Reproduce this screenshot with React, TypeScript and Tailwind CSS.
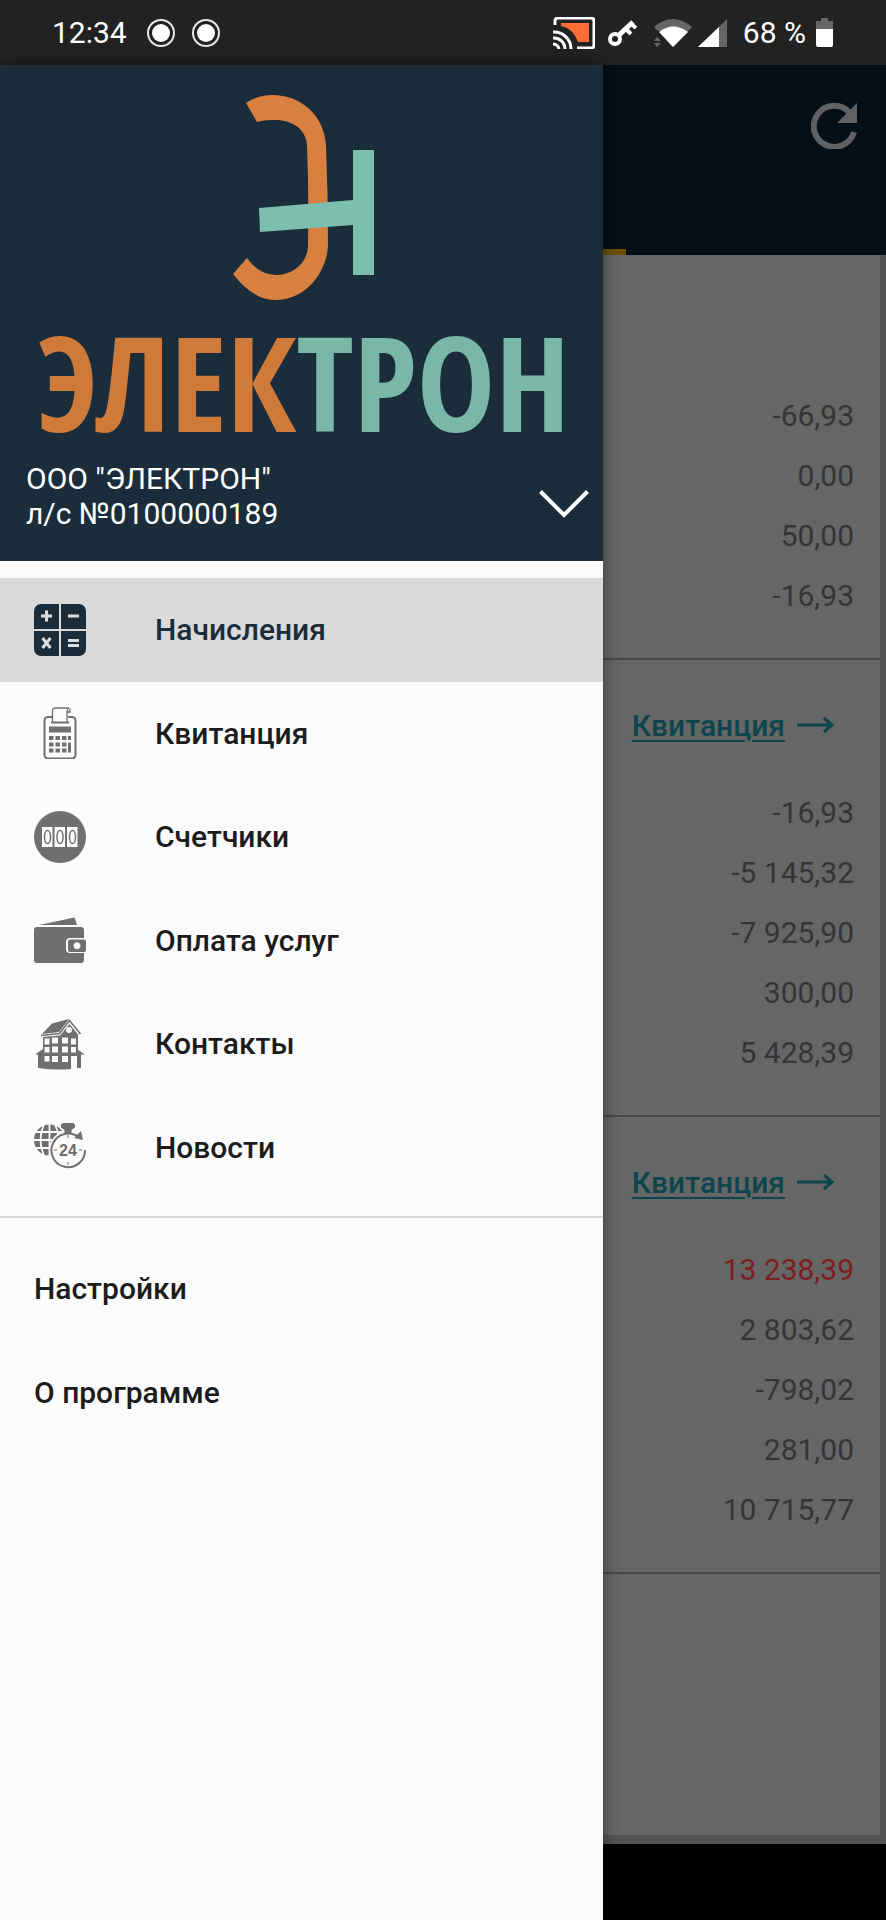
import { clsx } from 'clsx';

type Bill = {
  id: string;
  receipt: boolean;
  amounts: { value: string; debt?: boolean }[];
};

const bills: Bill[] = [
  {
    id: 'current',
    receipt: false,
    amounts: [{ value: '-66,93' }, { value: '0,00' }, { value: '50,00' }, { value: '-16,93' }],
  },
  {
    id: 'previous',
    receipt: true,
    amounts: [
      { value: '-16,93' },
      { value: '-5 145,32' },
      { value: '-7 925,90' },
      { value: '300,00' },
      { value: '5 428,39' },
    ],
  },
  {
    id: 'older',
    receipt: true,
    amounts: [
      { value: '13 238,39', debt: true },
      { value: '2 803,62' },
      { value: '-798,02' },
      { value: '281,00' },
      { value: '10 715,77' },
    ],
  },
];

function CalculatorIcon() {
  return (
    <svg viewBox="0 0 52 52" className="size-[52px]" aria-hidden="true">
      <path d="M7 0h18v25H0V7a7 7 0 0 1 7-7zM27 0h18a7 7 0 0 1 7 7v18H27zM0 27h25v25H7a7 7 0 0 1-7-7zM27 27h25v18a7 7 0 0 1-7 7H27z" fill="#1b2d3b" />
      <path d="M7 12h11M12.500 6.500v11M34 12h11M34 36.500h11M34 41.500h11" stroke="#dcdcdc" strokeWidth="3" />
      <path d="M8.500 34l8 10M16.500 34l-8 10" stroke="#dcdcdc" strokeWidth="3" />
    </svg>
  );
}

function ReceiptIcon() {
  return (
    <svg viewBox="0 0 52 52" className="size-[52px]" fill="none" stroke="#6f6f6f" aria-hidden="true">
      <path d="M18 10h-4a3.500 3.500 0 0 0-3.500 3.500V48a3.500 3.500 0 0 0 3.500 3.500h24a3.500 3.500 0 0 0 3.500-3.500V13.500A3.500 3.500 0 0 0 38 10h-4" strokeWidth="2" />
      <path d="M17 15.500h18" strokeWidth="2" />
      <path d="M18.500 15V4q0-3 3-3H35q-2 1-2 4v10M33 5h3V1.500" strokeWidth="1.300" />
      <path d="M15 19.500h22v6H15z" fill="#6f6f6f" stroke="none" />
      <path
        d="M15 29h4.500v4H15zM21.500 29H26v4h-4.500zM28 29h4.500v4H28zM34 29h3v4h-3zM15 35.500h4.500v4H15zM21.500 35.500H26v4h-4.500zM28 35.500h4.500v4H28zM15 41.500h4.500v4H15zM21.500 41.500H26v4h-4.500zM28 41.500h4.500v4H28zM34 35.500h3v10h-3z"
        fill="#6f6f6f"
        stroke="none"
      />
    </svg>
  );
}

function MeterIcon() {
  return (
    <svg viewBox="0 0 52 52" className="size-[52px]" aria-hidden="true">
      <circle cx="26" cy="26" r="26" fill="#6f6f6f" />
      <path d="M8 16h10.500v20H8zM20.500 16H31v20H20.500zM33 16h10.500v20H33z" fill="#fbfbfb" />
      <g fill="none" stroke="#6f6f6f" strokeWidth="1.500">
        <ellipse cx="13.500" cy="26" rx="3" ry="6.500" />
        <ellipse cx="26" cy="26" rx="3" ry="6.500" />
        <ellipse cx="38.500" cy="26" rx="3" ry="6.500" />
      </g>
    </svg>
  );
}

function WalletIcon() {
  return (
    <svg viewBox="0 0 52 52" className="size-[52px]" fill="#6f6f6f" aria-hidden="true">
      <path d="M5 11L40.500 3.500 43 11z" />
      <path d="M3 13h44q3 0 3 3v8H36q-4 0-4 4v7q0 4 4 4h14v7q0 3-3 3H3q-3 0-3-3V16q0-3 3-3z" />
      <path fillRule="evenodd" d="M36 25.500h14q2 0 2 2v8.500q0 2-2 2H36q-2 0-2-2v-8.500q0-2 2-2zM43 28.300a3.500 3.500 0 1 0 .01 0z" />
    </svg>
  );
}

function HouseIcon() {
  return (
    <svg viewBox="0 0 52 52" className="size-[52px]" aria-hidden="true">
      <path d="M8 16L18 5.500 35 1 25 14z" fill="#6f6f6f" />
      <path d="M7 17.500l18.500-2L35.500 2.500 46.500 16" fill="none" stroke="#6f6f6f" strokeWidth="1.600" />
      <path d="M9 19l17-1.500L35.500 6 44 16.500V32l7 4.500h-4V50h-4V38h-6v13q-16 1.500-33-1V36.500H1L9 31z" fill="#6f6f6f" />
      <g fill="#fbfbfb">
        <circle cx="35" cy="12" r="3" />
        <path d="M10.500 20.500h5v6h-5zM18 19.500h6v6h-6zM28 19.500h6v6h-6zM37 20.500h5v6h-5z" />
        <path d="M10.500 29h5v5.500h-5zM18 28.500h6v6h-6zM28 28.500h6v6h-6zM37 29h5v5.500h-5z" />
        <path d="M10.500 38h5v5.500h-5zM18 38h6v6h-6zM28 38h6v6h-6z" />
      </g>
    </svg>
  );
}

function NewsIcon() {
  return (
    <svg viewBox="0 0 52 52" className="size-[52px]" aria-hidden="true">
      <circle cx="15.500" cy="19" r="15.500" fill="#6f6f6f" />
      <path d="M0 11h31M0 19h31M0 27h31M15.500 3v32M10 3Q3 19 10 35M21 3q7 16 0 32" fill="none" stroke="#fbfbfb" strokeWidth="1.800" />
      <circle cx="34" cy="29" r="19" fill="#fbfbfb" />
      <path d="M45 16.500A16.800 16.800 0 1 0 51 29" fill="none" stroke="#6f6f6f" strokeWidth="2" />
      <path d="M47 10l2 9-9-2zM29 2h10l2 1.500v3L37.500 9v3h-7V9L27 6.500v-3z" fill="#6f6f6f" />
      <path d="M34 14v3M34 41v3M20 29h3M45 29h3" stroke="#6f6f6f" strokeWidth="1" />
      <text x="34" y="34.500" textAnchor="middle" fontFamily="Liberation Sans, sans-serif" fontSize="16" fontWeight="700" fill="#6f6f6f">24</text>
    </svg>
  );
}

const menu = [
  { label: 'Начисления', icon: CalculatorIcon, active: true },
  { label: 'Квитанция', icon: ReceiptIcon },
  { label: 'Счетчики', icon: MeterIcon },
  { label: 'Оплата услуг', icon: WalletIcon },
  { label: 'Контакты', icon: HouseIcon },
  { label: 'Новости', icon: NewsIcon },
];

function StatusBar() {
  return (
    <header className="flex h-[65px] shrink-0 items-center bg-[#222222] pr-[53px] pl-[52px] text-[30px] text-white">
      <span>12:34</span>
      <svg viewBox="0 0 74 30" className="ml-[19px] h-[30px] w-[74px]" aria-hidden="true">
        <g fill="none" stroke="#e8e8e8" strokeWidth="2">
          <circle cx="15" cy="15" r="13" />
          <circle cx="60" cy="15" r="13" />
        </g>
        <circle cx="15" cy="15" r="9" fill="#ffffff" />
        <circle cx="60" cy="15" r="9" fill="#ffffff" />
      </svg>

      <div className="ml-auto flex items-center">
        {/* cast */}
        <svg viewBox="0 0 42 32" className="h-8 w-[42px]" fill="none" aria-hidden="true">
          <path d="M2 8V4q0-3 3-3h33q3 0 3 3v24q0 3-3 3H24" stroke="#ffffff" strokeWidth="3" />
          <path d="M8 6h28v19H25Q20 11 8 9z" fill="#ff6e37" />
          <path d="M0 15a17 17 0 0 1 18 17M0 21a11 11 0 0 1 12 11M0 27a6 6 0 0 1 6 5" stroke="#ffffff" strokeWidth="3" />
        </svg>
        {/* vpn key */}
        <svg viewBox="0 0 30 26" className="ml-[13px] h-[26px] w-[30px]" fill="none" stroke="#ffffff" aria-hidden="true">
          <circle cx="7" cy="19" r="5" strokeWidth="4" />
          <path d="M11 15L25 2" strokeWidth="5" />
          <path d="M18 9l5 5M23 4l5 4" strokeWidth="4" />
        </svg>
        {/* wifi */}
        <svg viewBox="0 0 38 28" className="ml-4 h-7 w-[38px]" aria-hidden="true">
          <path d="M0 8q19-16 38 0L19 28z" fill="#666666" />
          <path d="M0 12h8l7 16H0z" fill="#222222" />
          <path d="M5 13q14-11 29 0L19 28z" fill="#ffffff" />
          <path d="M0 22l3-4 4 4zM0 24h7l-4 4z" fill="#666666" />
        </svg>
        {/* mobile signal */}
        <svg viewBox="0 0 29 28" className="ml-[6px] h-7 w-[29px]" aria-hidden="true">
          <path d="M29 0v28H0z" fill="#666666" />
          <path d="M21 8v20H0z" fill="#ffffff" />
        </svg>
        <span className="ml-4">68 %</span>
        {/* battery */}
        <svg viewBox="0 0 17 29" className="ml-[10px] h-[29px] w-[17px]" aria-hidden="true">
          <path d="M5 0h7v3h5v9H0V3h5z" fill="#666666" />
          <path d="M0 11h17v16q0 2-2 2H2q-2 0-2-2z" fill="#ffffff" />
        </svg>
      </div>
    </header>
  );
}

function Emblem() {
  return (
    <svg viewBox="0 0 142 205" className="h-[205px] w-[142px]" aria-hidden="true">
      <path
        d="M13 8Q25 0 39 0C68 0 91 20 93 50Q95 100 95 150C94 178 72 205 43 205Q20 205 0 179L14 163Q26 180 43 180C60 180 75 168 75 150Q76 100 74 50C73 34 59 24 39 25Q30 25 24 27z"
        fill="#d8803f"
      />
      <path d="M120 55h21v125h-21v-50L27 137l-1-24 94-8z" fill="#7dbfae" />
    </svg>
  );
}

function Drawer() {
  return (
    <aside className="relative z-10 flex w-[603px] shrink-0 flex-col bg-[#fbfbfb] shadow-[0_0_16px_rgba(0,0,0,0.45)]">
      <div className="bg-[#1b2d3b] pt-[30px] pb-[30px] text-white">
        <div className="flex flex-col items-center pl-1">
          <Emblem />
          <p className="mt-4 font-['Open_Sans_Condensed','Open_Sans',sans-serif] text-[132px] leading-[130px] font-bold whitespace-nowrap text-[#cf7a38]">
            ЭЛЕК<span className="text-[#79b7a7]">ТРОН</span>
          </p>
        </div>
        <div className="mt-[15px] flex items-center justify-between pr-[14px] pl-[26px]">
          <div className="text-[30px] leading-[35px]">
            <p>ООО "ЭЛЕКТРОН"</p>
            <p>л/с №0100000189</p>
          </div>
          <button type="button" aria-label="Выбрать лицевой счет" className="pt-4">
            <svg viewBox="0 0 50 28" className="h-7 w-[50px]" fill="none" stroke="#ffffff" strokeWidth="4">
              <path d="M1.500 1.500L25 25 48.500 1.500" />
            </svg>
          </button>
        </div>
      </div>

      <nav className="flex flex-col pt-[17px]">
        <div className="grid h-[621px] grid-rows-6">
          {menu.map(({ label, icon: Icon, active }) => (
            <a
              key={label}
              href="#"
              className={clsx(
                'flex items-center gap-[69px] pl-[34px] text-[30px] font-medium',
                active ? 'bg-[#dadada] text-[#1b2d3b]' : 'text-[#1c1c1c]',
              )}
            >
              <Icon />
              {label}
            </a>
          ))}
        </div>
        <div className="mt-[17px] border-t-2 border-[#d8d8d8] pt-[18px] text-[30px] font-medium text-[#1c1c1c]">
          <a href="#" className="flex h-[104px] items-center pl-[34px]">Настройки</a>
          <a href="#" className="flex h-[104px] items-center pl-[34px]">О программе</a>
        </div>
      </nav>
    </aside>
  );
}

export default function App() {
  return (
    <div className="flex min-h-screen flex-col bg-black font-['Roboto',sans-serif]">
      <StatusBar />
      <div className="flex flex-1">
        <Drawer />

        <main className="flex min-w-0 flex-1 flex-col">
          <div className="flex h-[190px] flex-col items-end justify-between bg-[#040f16]">
            <button type="button" aria-label="Обновить" className="mt-[37px] mr-[28px]">
              <svg viewBox="0 0 47 47" className="size-[47px]" aria-hidden="true">
                <path d="M38 10A20.500 20.500 0 1 0 43 30" fill="none" stroke="#5f6163" strokeWidth="6" />
                <path d="M46 1v20H26z" fill="#5f6163" />
              </svg>
            </button>
            <div className="h-[6px] w-full">
              <div className="h-full w-[23px] bg-[#6b4e00]" />
            </div>
          </div>

          <div className="flex flex-1 flex-col bg-[#545454] pr-[6px] pb-[9px]">
            <div className="flex-1 bg-[#666666] pt-[130px]">
              {bills.map((bill) => (
                <section key={bill.id} className="border-b-2 border-[#48484c] pb-[33px]">
                  {bill.receipt && (
                    <div className="flex h-[122px] items-center justify-end gap-3 pt-[8px] pr-[46px]">
                      <a
                        href="#"
                        className="text-[30px] font-medium text-[#0c454b] underline decoration-2 underline-offset-4"
                      >
                        Квитанция
                      </a>
                      <svg viewBox="0 0 37 20" className="h-5 w-[37px]" fill="none" stroke="#0c454b" strokeWidth="3" aria-hidden="true">
                        <path d="M0 10h34M27 3l8 7-8 7" />
                      </svg>
                    </div>
                  )}
                  {bill.amounts.map(({ value, debt }) => (
                    <p
                      key={value}
                      className={clsx(
                        'flex h-[60px] items-center justify-end pr-[26px] text-[30px]',
                        debt ? 'text-[#7a2020]' : 'text-[#353535]',
                      )}
                    >
                      {value}
                    </p>
                  ))}
                </section>
              ))}
            </div>
          </div>
          <div className="h-[76px] bg-black" />
        </main>
      </div>
    </div>
  );
}
